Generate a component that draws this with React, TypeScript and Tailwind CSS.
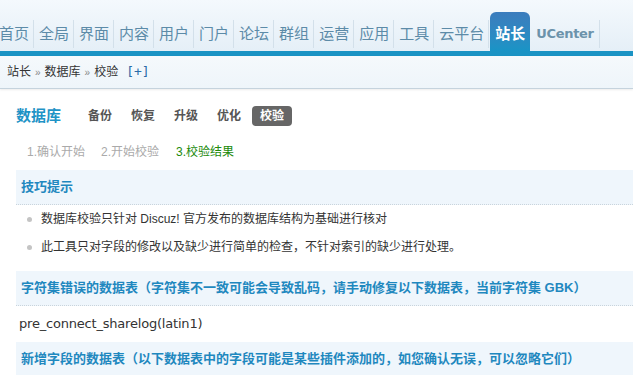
import React from 'react';

const tabs = ['首页', '全局', '界面', '内容', '用户', '门户', '论坛', '群组', '运营', '应用', '工具', '云平台'];
const subTabs = ['备份', '恢复', '升级', '优化'];

const cjk = "font-['Liberation_Sans','Noto_Sans_CJK_SC',sans-serif]";

function SectionHeader({ children }: { children: React.ReactNode }) {
    return (
        <div className="ml-[16px] h-[35px] bg-[#eff6fc] border-b border-dotted border-[#c9d4dc] pl-[5px] flex items-center whitespace-nowrap text-[13px] font-bold text-[#1f88bf]">
            {children}
        </div>
    );
}

export default function App() {
    return (
        <div className={`w-[633px] h-[375px] overflow-hidden bg-white text-[#333] ${cjk}`}>
            {/* top nav */}
            <div className="h-[56px] bg-gradient-to-b from-[#f4f9fd] to-[#e5eff7] border-b-[5px] border-[#1a93c4] flex items-end">
                {tabs.map((t, i) => (
                    <div
                        key={t}
                        className={`h-[28px] mb-[3px] leading-[28px] pl-[5px] pr-[4px] text-[15px] text-[#5c8ba8] border-r border-[#d3e0ea] ${i === 0 ? '-ml-[6px]' : ''}`}
                    >
                        {t}
                    </div>
                ))}
                <div className="h-[39px] pt-[8px] ml-[1px] px-[5px] rounded-t-[6px] bg-gradient-to-b from-[#3b7cbd] to-[#1894c6] text-white text-[15px] font-bold leading-[28px]">
                    站长
                </div>
                <div className="h-[28px] mb-[3px] leading-[28px] pl-[6px] pr-[5px] text-[13px] font-bold text-[#6c93ab] border-r border-[#d3e0ea] font-['DejaVu_Sans',sans-serif] tracking-[-0.3px]">
                    UCenter
                </div>
            </div>

            {/* breadcrumb */}
            <div className="h-[33px] bg-gradient-to-b from-[#f5f9fc] to-[#eef5fa] border-b border-[#c5d3dd] shadow-[0_1px_2px_rgba(0,0,0,0.08)] pl-[7px] flex items-center text-[12px] text-[#333]">
                <span>站长</span>
                <span className="mx-[4px] text-[10px] text-[#888]">»</span>
                <span>数据库</span>
                <span className="mx-[4px] text-[10px] text-[#888]">»</span>
                <span>校验</span>
                <span className="ml-[8px] text-[13px] text-[#2a6aa8] font-['DejaVu_Sans_Mono',monospace]">[+]</span>
            </div>

            {/* sub nav */}
            <div className="mt-[17px] h-[20px] pl-[16px] flex items-center whitespace-nowrap">
                <span className="text-[15px] font-bold text-[#1f93c6]">数据库</span>
                <div className="ml-[19px] flex gap-[3px]">
                    {subTabs.map(s => (
                        <span key={s} className="h-[20px] leading-[20px] px-[8px] text-[12px] font-bold text-[#555]">{s}</span>
                    ))}
                    <span className="h-[20px] leading-[20px] px-[8px] rounded-[4px] bg-[#666] text-[12px] font-bold text-white">校验</span>
                </div>
            </div>

            {/* steps */}
            <div className="mt-[16px] h-[20px] pl-[27px] flex items-center text-[12px] whitespace-nowrap">
                <span className="text-[#aaa] w-[74px]">1.确认开始</span>
                <span className="text-[#aaa] w-[75px]">2.开始校验</span>
                <span className="text-[#218a0a]">3.校验结果</span>
            </div>

            <div className="mt-[8px]">
                <SectionHeader>技巧提示</SectionHeader>
                <ul className="pb-[10px] text-[12px] text-[#333]">
                    <li className="h-[28px] flex items-center pl-[27px]">
                        <span className="w-[5px] h-[5px] rounded-full bg-[#c4c4c4] mr-[9px]" />
                        数据库校验只针对 Discuz! 官方发布的数据库结构为基础进行核对
                    </li>
                    <li className="h-[28px] flex items-center pl-[27px]">
                        <span className="w-[5px] h-[5px] rounded-full bg-[#c4c4c4] mr-[9px]" />
                        此工具只对字段的修改以及缺少进行简单的检查，不针对索引的缺少进行处理。
                    </li>
                </ul>
                <SectionHeader>字符集错误的数据表（字符集不一致可能会导致乱码，请手动修复以下数据表，当前字符集 GBK）</SectionHeader>
                <div className="h-[36px] pl-[19px] flex items-center text-[13px] text-[#333] font-['DejaVu_Sans',sans-serif] tracking-[-0.2px]">pre_connect_sharelog(latin1)</div>
                <SectionHeader>新增字段的数据表（以下数据表中的字段可能是某些插件添加的，如您确认无误，可以忽略它们）</SectionHeader>
            </div>
        </div>
    );
}
